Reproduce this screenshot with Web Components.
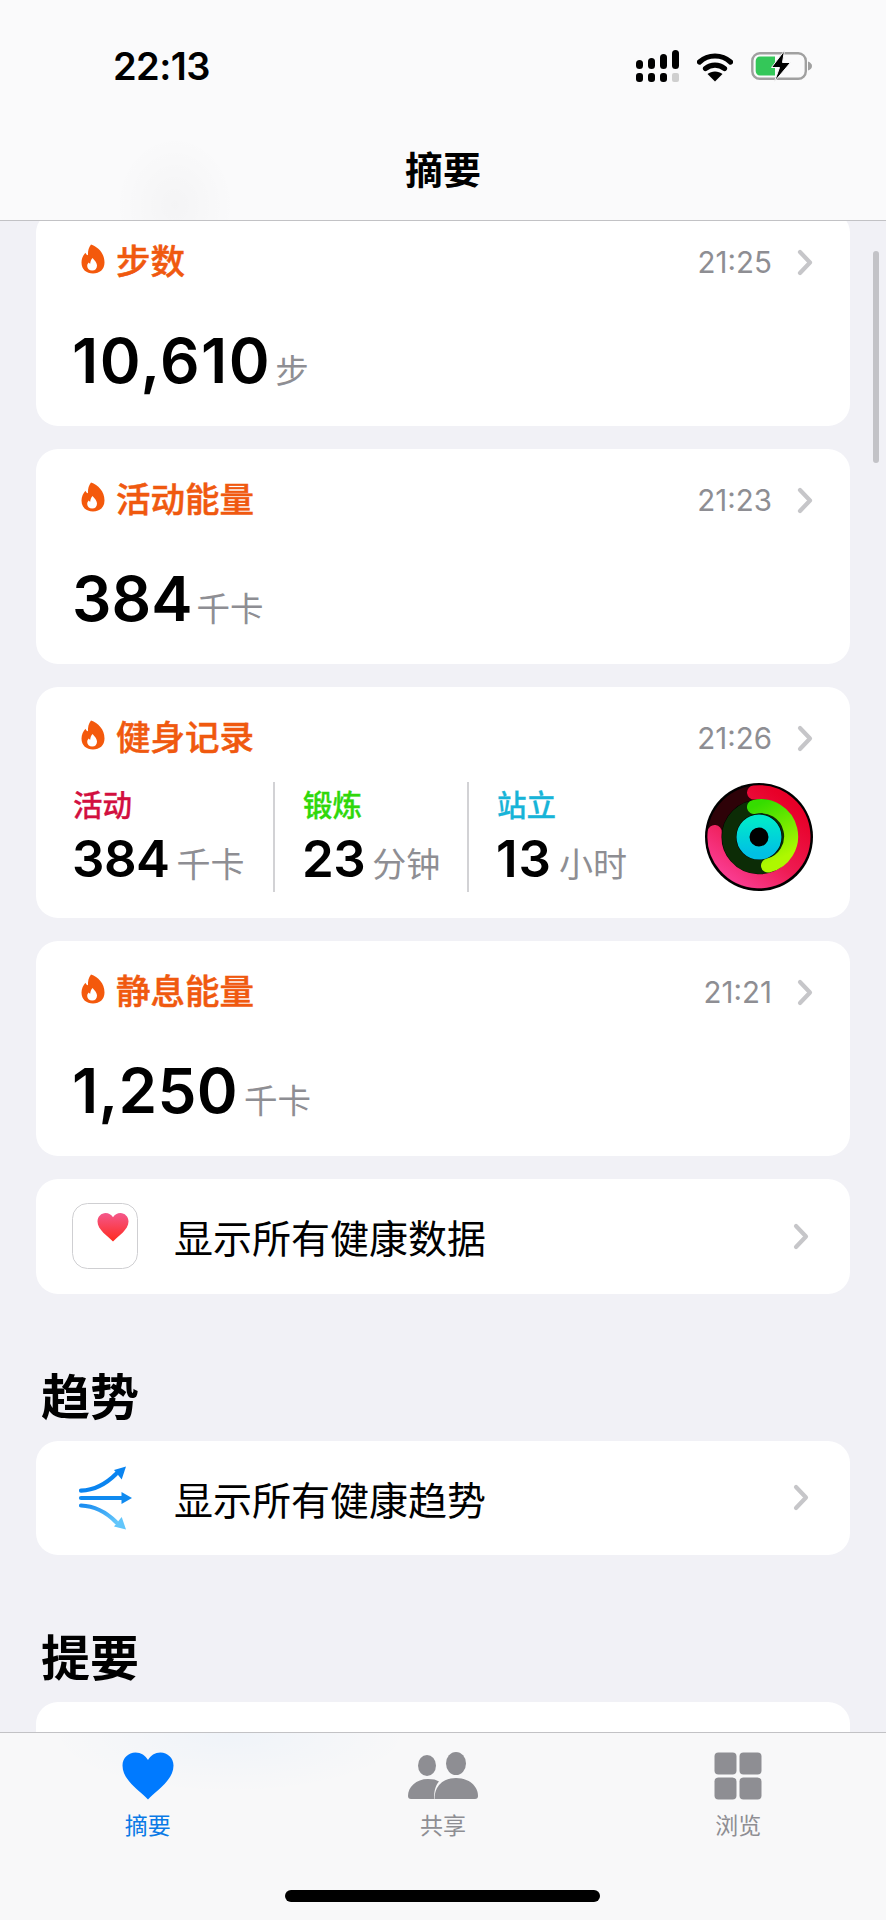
<!DOCTYPE html>
<html lang="zh">
<head>
<meta charset="utf-8">
<title>摘要</title>
<style>
  html, body { margin: 0; padding: 0; background: #f1f1f6; }
</style>
</head>
<body>
<health-app>
  <nav-header slot="top">摘要</nav-header>

  <health-card time="21:25">
    <span slot="title">步数</span>
    <metric-value unit="步" style="--num-spacing:1.5px">10,610</metric-value>
  </health-card>
  <health-card time="21:23">
    <span slot="title">活动能量</span>
    <metric-value unit="千卡">384</metric-value>
  </health-card>
  <health-card time="21:26" compact>
    <span slot="title">健身记录</span>
    <activity-summary>
      <activity-col label="活动" color="#d2103f" unit="千卡" style="width:202px">384</activity-col>
      <activity-col label="锻炼" color="#2fd80a" unit="分钟" style="width:194px">23</activity-col>
      <activity-col label="站立" color="#17b4d8" unit="小时" last style="--num-spacing:1px;--unit-gap:7px">13</activity-col>
      <activity-ring></activity-ring>
    </activity-summary>
  </health-card>
  <health-card time="21:21">
    <span slot="title">静息能量</span>
    <metric-value unit="千卡" style="--num-spacing:0.300px;--unit-gap:6px">1,250</metric-value>
  </health-card>
  <link-row>
    <svg slot="icon" width="66" height="66" viewBox="0 0 66 66">
      <defs>
        <linearGradient id="hg" x1="0" y1="0" x2="0" y2="1">
          <stop offset="0" stop-color="#f4588c"/>
          <stop offset="1" stop-color="#ff2a1e"/>
        </linearGradient>
      </defs>
      <rect x="0.5" y="0.5" width="65" height="65" rx="15" fill="#fff" stroke="#cfcfd2"/>
      <path d="M41 38.500C36 33 25.500 27 25.500 18.500C25.500 13.500 29.500 10 33.500 10C36.800 10 39.500 11.600 41 14.300C42.500 11.600 45.200 10 48.500 10C52.500 10 56.500 13.500 56.500 18.500C56.500 27 46 33 41 38.500Z" fill="url(#hg)"/>
    </svg>
    显示所有健康数据
  </link-row>

  <section-heading>趋势</section-heading>
  <link-row>
    <svg slot="icon" width="66" height="66" viewBox="-7 -2 66 66" fill="none">
      <defs>
        <linearGradient id="ag" x1="0" y1="0" x2="1" y2="1">
          <stop offset="0" stop-color="#1a8cf0"/>
          <stop offset="1" stop-color="#62c6fb"/>
        </linearGradient>
      </defs>
      <path d="M2 23.700C16 23 27 17 37 7" stroke="#0a84f0" stroke-width="4.200" stroke-linecap="round"/>
      <path d="M47 -0.500L35 3L42.700 12.500Z" fill="#0a84f0"/>
      <path d="M2 31H44" stroke="#0f8af0" stroke-width="4.200" stroke-linecap="round"/>
      <path d="M53 31L42.500 25V37Z" fill="#0f8af0"/>
      <path d="M2 38.500C16 39 27 45 37 55" stroke="url(#ag)" stroke-width="4.200" stroke-linecap="round"/>
      <path d="M47 62.500L35 59.500L42.700 50Z" fill="#62c6fb"/>
    </svg>
    显示所有健康趋势
  </link-row>

  <section-heading>提要</section-heading>
  <health-card time="" blank></health-card>

  <tab-bar slot="bottom">
    <tab-item active label="摘要">
      <svg width="52" height="48" viewBox="0 0 52 48"><path d="M26 47.500C17 38 0.500 28 0.500 13.500C0.500 6 6.500 0.500 13.500 0.500C19 0.500 23.500 3.500 26 8C28.500 3.500 33 0.500 38.500 0.500C45.500 0.500 51.500 6 51.500 13.500C51.500 28 35 38 26 47.500Z" fill="#007aff"/></svg>
    </tab-item>
    <tab-item label="共享">
      <svg width="70" height="48" viewBox="0 0 70 48" fill="#8e8e93">
        <ellipse cx="19" cy="13.500" rx="9" ry="10.500"/>
        <ellipse cx="48" cy="11.500" rx="10" ry="11.500"/>
        <path d="M26 47H26C26 39 27.500 33.500 31 29.500C28.500 27.800 25 27 20 27C8 27 0 35 0 44C0 46 1 47 3 47Z"/>
        <path d="M26.500 47C26.500 34 35 26 48 26C61 26 70 34 70 44C70 46 69 47 67 47Z"/>
      </svg>
    </tab-item>
    <tab-item label="浏览">
      <svg width="48" height="48" viewBox="0 0 48 48" fill="#8e8e93">
        <rect x="0.500" y="0.500" width="22" height="22" rx="4"/>
        <rect x="25.500" y="0.500" width="22" height="22" rx="4"/>
        <rect x="0.500" y="25.500" width="22" height="22" rx="4"/>
        <rect x="25.500" y="25.500" width="22" height="22" rx="4"/>
      </svg>
    </tab-item>
  </tab-bar>
</health-app>

<script>
const CJK = '"Noto Sans CJK SC", "Noto Sans", sans-serif';
const LATIN_CJK = 'Inter, "Noto Sans CJK SC", sans-serif';

const chevron = `
  <svg class="chev" width="16" height="27" viewBox="0 0 16 27" fill="none">
    <path d="M3 3L13 13.500L3 24" stroke="#c6c6c9" stroke-width="4.200" stroke-linecap="round" stroke-linejoin="round"/>
  </svg>`;

// base: every element stamps its markup into an open shadow root
class ShadowElement extends HTMLElement {
  constructor() {
    super();
    this.attachShadow({ mode: 'open' });
  }

  connectedCallback() {
    this.shadowRoot.innerHTML = this.render();
  }

  attr(name) {
    return this.getAttribute(name) || '';
  }
}

class HealthApp extends ShadowElement {
  render() {
    return `
      <style>
        :host {
          display: block;
          position: relative;
          width: 886px;
          height: 1920px;
          overflow: hidden;
          background: #f1f1f6;
        }
        .scroll {
          display: flex;
          flex-direction: column;
          gap: 23px;
          padding: 211px 36px 0;
        }
        .indicator {
          position: absolute;
          top: 251px;
          right: 7px;
          width: 6px;
          height: 212px;
          border-radius: 3px;
          background: #c3c3c7;
        }
      </style>
      <div class="scroll"><slot></slot></div>
      <div class="indicator"></div>
      <slot name="top"></slot>
      <slot name="bottom"></slot>
    `;
  }
}

class NavHeader extends ShadowElement {
  render() {
    return `
      <style>
        :host {
          position: absolute;
          top: 0;
          left: 0;
          right: 0;
          z-index: 5;
          display: block;
          height: 220px;
          box-sizing: content-box;
          border-bottom: 1px solid #c2c2c5;
          background:
            radial-gradient(ellipse 60px 70px at 175px 205px, rgba(0, 0, 0, 0.022), transparent),
            #fafafb;
        }
        .status {
          display: flex;
          justify-content: space-between;
          align-items: flex-start;
          padding: 50px 73px 0 113px;
          height: 32px;
        }
        .time {
          font: 600 38px/32px ${LATIN_CJK};
          letter-spacing: -0.600px;
          color: #000;
        }
        .icons {
          display: flex;
          gap: 18px;
        }
        .title {
          margin-top: 64px;
          text-align: center;
          font: 600 38px/44px ${CJK};
          color: #000;
        }
        svg { display: block; }
      </style>
      <div class="status">
        <span class="time">22:13</span>
        <div class="icons">
          <svg width="43" height="32" viewBox="0 0 43 32">
            <rect x="0" y="10" width="7" height="9" rx="3.500"/>
            <rect x="12" y="8" width="7" height="11" rx="3.500"/>
            <rect x="24" y="4" width="7" height="15" rx="3.500"/>
            <rect x="36" y="0" width="7" height="19" rx="3.500"/>
            <rect x="0" y="23" width="7" height="9" rx="3"/>
            <rect x="12" y="23" width="7" height="9" rx="3"/>
            <rect x="24" y="23" width="7" height="9" rx="3"/>
            <rect x="36" y="23" width="7" height="9" rx="2" fill="#cfcfcf"/>
          </svg>
          <svg width="36" height="30" viewBox="0 0 36 30" fill="none" style="margin-top:2px">
            <path d="M2.500 10C11 2 25 2 33.500 10" stroke="#000" stroke-width="5.200" stroke-linecap="round"/>
            <path d="M8.500 16.500C14 12 22 12 27.500 16.500" stroke="#000" stroke-width="5.200" stroke-linecap="round"/>
            <path d="M18 29.500L10.500 22C14.500 18.500 21.500 18.500 25.500 22Z" fill="#000"/>
          </svg>
          <svg width="62" height="32" viewBox="0 0 62 32" fill="none">
            <rect x="1.300" y="3.300" width="53.500" height="25.500" rx="7.500" stroke="#a0a0a0" stroke-width="2.400"/>
            <path d="M57 11.500C59.500 12.500 61 14 61 16C61 18 59.500 19.500 57 20.500Z" fill="#a0a0a0"/>
            <path d="M9 6.500H24V25.500H9C6.500 25.500 4.700 23.700 4.700 21V11C4.700 8.300 6.500 6.500 9 6.500Z" fill="#34c759"/>
            <path d="M33.500 0.500L20.500 17.500H28.500L23.500 31.500L39.500 12.500H31.500Z" fill="#000" stroke="#fafafb" stroke-width="1"/>
          </svg>
        </div>
      </div>
      <div class="title"><slot></slot></div>
    `;
  }
}

class HealthCard extends ShadowElement {
  render() {
    const blank = this.hasAttribute('blank');
    const compact = this.hasAttribute('compact');
    const head = blank ? '' : `
      <div class="head">
        <svg class="flame" width="24" height="30" viewBox="0 0 24 30">
          <path fill="#f4590c" d="M10 0.500C17 3 23.500 9 23.500 18.500C23.500 25.500 18.500 29.500 12 29.500C5.500 29.500 0.500 25.500 0.500 18.500C0.500 14.500 2.300 11 4.500 8.700C5 10.200 5.800 11 7 11.300C6.800 7.500 7.500 3.500 10 0.500Z"/>
          <path fill="#fff" d="M11.500 14C14 16.500 16 19 16 21.500C16 24.500 14.300 26.500 11.200 26.500C8.200 26.500 6.200 24.700 6.200 22C6.200 20.500 6.900 19.400 7.700 18.600C8.100 19.200 8.500 19.500 9.200 19.700C9.300 17.600 10 15.600 11.500 14Z"/>
        </svg>
        <span class="title"><slot name="title"></slot></span>
        <span class="time">${this.attr('time')}</span>
        ${chevron}
      </div>`;
    return `
      <style>
        :host {
          display: block;
          background: #fff;
          border-radius: 22px;
          padding: 28px 37px 30px;
          ${blank ? 'height: 215px; box-sizing: border-box;' : ''}
        }
        .head {
          display: flex;
          align-items: center;
          height: 40px;
        }
        .flame { margin: 0 11px 0 8px; flex: none; }
        .title {
          flex: 1;
          font: 500 34.500px/40px ${CJK};
          -webkit-text-stroke: 0.500px #f0590f;
          color: #f0590f;
        }
        .time {
          margin: 6px 25px 0 0;
          font: 400 29.500px/40px ${LATIN_CJK};
          color: #8e8e93;
        }
        .chev { margin-top: 6px; }
        .body { margin-top: ${compact ? 27 : 47}px; }
        :host([compact]) { padding-bottom: 26px; }
      </style>
      ${head}
      <div class="body"><slot></slot></div>
    `;
  }
}

class MetricValue extends ShadowElement {
  render() {
    return `
      <style>
        :host {
          display: flex;
          align-items: baseline;
          gap: var(--unit-gap, 4px);
          height: 70px;
        }
        .num {
          margin-left: -1px;
          font: 600 62px/70px ${LATIN_CJK};
          color: #000;
          letter-spacing: var(--num-spacing, 0);
        }
        .unit {
          font: 400 33.500px/40px ${CJK};
          color: #8e8e93;
        }
      </style>
      <span class="num"><slot></slot></span>
      <span class="unit">${this.attr('unit')}</span>
    `;
  }
}

class ActivitySummary extends ShadowElement {
  render() {
    return `
      <style>
        :host {
          display: flex;
          align-items: stretch;
          height: 110px;
        }
      </style>
      <slot></slot>
    `;
  }
}

class ActivityCol extends ShadowElement {
  render() {
    return `
      <style>
        :host {
          display: flex;
          flex-direction: column;
          box-sizing: border-box;
          padding-left: 28px;
          border-right: 2px solid #d2d2d5;
        }
        :host(:first-child) { padding-left: 0; }
        :host([last]) { border-right: 0; flex: 1; }
        .label {
          margin-top: 3px;
          font: 500 29.500px/36px ${CJK};
          -webkit-text-stroke: 0.300px ${this.attr('color')};
          color: ${this.attr('color')};
        }
        .row {
          display: flex;
          align-items: baseline;
          gap: var(--unit-gap, 7px);
          margin-top: 9px;
        }
        .num {
          margin-left: -1px;
          font: 600 51px/58px ${LATIN_CJK};
          letter-spacing: var(--num-spacing, -0.500px);
          color: #000;
        }
        .unit {
          font: 400 34px/40px ${CJK};
          color: #8e8e93;
        }
      </style>
      <div class="label">${this.attr('label')}</div>
      <div class="row">
        <span class="num"><slot></slot></span>
        <span class="unit">${this.attr('unit')}</span>
      </div>
    `;
  }
}

class ActivityRing extends ShadowElement {
  render() {
    return `
      <style>
        :host { display: block; flex: none; width: 108px; height: 108px; margin-top: 1px; }
        svg { display: block; }
      </style>
      <svg width="108" height="108" viewBox="-54 -54 108 108" fill="none">
        <defs>
          <linearGradient id="red" x1="0.700" y1="0" x2="0" y2="0.900">
            <stop offset="0" stop-color="#e80028"/>
            <stop offset="0.550" stop-color="#ee1c54"/>
            <stop offset="1" stop-color="#fb3f97"/>
          </linearGradient>
          <linearGradient id="green" x1="0" y1="0" x2="0.300" y2="1">
            <stop offset="0" stop-color="#35dc00"/>
            <stop offset="1" stop-color="#aef800"/>
          </linearGradient>
          <linearGradient id="cyan" x1="0" y1="0" x2="0" y2="1">
            <stop offset="0" stop-color="#00e8cc"/>
            <stop offset="1" stop-color="#00c0e4"/>
          </linearGradient>
        </defs>
        <circle r="54" fill="#000"/>
        <circle r="44.500" stroke="#2e0208" stroke-width="14"/>
        <circle r="30" stroke="#0c2c06" stroke-width="14"/>
        <path d="M-5 -44.500A44.500 44.500 0 1 1 -44.300 -5" stroke="url(#red)" stroke-width="14" stroke-linecap="round"/>
        <path d="M-5 -30A30 30 0 0 1 9 28.600" stroke="url(#green)" stroke-width="14" stroke-linecap="round"/>
        <circle r="16" stroke="url(#cyan)" stroke-width="13"/>
      </svg>
    `;
  }
}

class LinkRow extends ShadowElement {
  render() {
    return `
      <style>
        :host {
          display: flex;
          align-items: center;
          height: 114.500px;
          background: #fff;
          border-radius: 22px;
          padding: 0 41px 0 36px;
        }
        .icon { flex: none; width: 66px; height: 66px; margin-right: 36px; }
        .text {
          flex: 1;
          font: 400 39px/50px ${CJK};
          color: #000;
        }
      </style>
      <div class="icon"><slot name="icon"></slot></div>
      <div class="text"><slot></slot></div>
      ${chevron}
    `;
  }
}

class SectionHeading extends ShadowElement {
  render() {
    return `
      <style>
        :host {
          display: block;
          padding: 52px 5px 0;
          font: 600 49px/49px ${CJK};
          color: #000;
        }
      </style>
      <slot></slot>
    `;
  }
}

class TabBar extends ShadowElement {
  render() {
    return `
      <style>
        :host {
          position: absolute;
          left: 0;
          right: 0;
          bottom: 0;
          z-index: 5;
          display: block;
          height: 187px;
          border-top: 1px solid #c2c2c5;
          background:
            radial-gradient(ellipse 180px 60px at 230px 0, rgba(0, 122, 255, 0.035), transparent),
            #f8f8f9;
        }
        .tabs {
          display: grid;
          grid-template-columns: repeat(3, 1fr);
          padding-top: 19px;
        }
        .home {
          position: absolute;
          left: 285px;
          bottom: 18px;
          width: 315px;
          height: 12px;
          border-radius: 6px;
          background: #000;
        }
      </style>
      <div class="tabs"><slot></slot></div>
      <div class="home"></div>
    `;
  }
}

class TabItem extends ShadowElement {
  render() {
    return `
      <style>
        :host {
          display: flex;
          flex-direction: column;
          align-items: center;
          gap: 10px;
        }
        .icon { height: 48px; display: flex; }
        .label {
          font: 400 23px/28px ${CJK};
          color: ${this.hasAttribute('active') ? '#0a7ae6' : '#8e8e93'};
        }
      </style>
      <div class="icon"><slot></slot></div>
      <div class="label">${this.attr('label')}</div>
    `;
  }
}

customElements.define('health-app', HealthApp);
customElements.define('nav-header', NavHeader);
customElements.define('health-card', HealthCard);
customElements.define('metric-value', MetricValue);
customElements.define('activity-summary', ActivitySummary);
customElements.define('activity-col', ActivityCol);
customElements.define('activity-ring', ActivityRing);
customElements.define('link-row', LinkRow);
customElements.define('section-heading', SectionHeading);
customElements.define('tab-bar', TabBar);
customElements.define('tab-item', TabItem);
</script>
</body>
</html>
